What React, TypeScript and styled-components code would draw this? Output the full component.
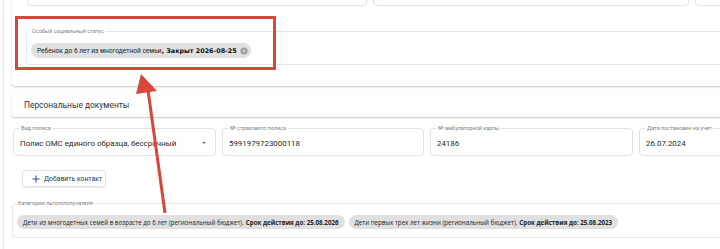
import styled, { createGlobalStyle } from 'styled-components';

const GlobalStyle = createGlobalStyle`
  html, body {
    margin: 0;
    padding: 0;
    background: #fff;
    overflow: hidden;
  }
  body {
    font-family: Roboto, "Liberation Sans", Arial, sans-serif;
    color: #222;
  }
`;

const Page = styled.div`
  position: relative;
  width: 720px;
  height: 249px;
  overflow: hidden;
  padding-left: 3px;
  box-sizing: border-box;
`;

const Shell = styled.div`
  height: 100%;
  border-left: 1px solid #e6e6e6;
  padding-left: 8px;
  display: flex;
  flex-direction: column;
  align-items: flex-start;
`;

const Card = styled.div`
  width: 760px;
  flex-shrink: 0;
  background: #fff;
  border-radius: 3px;
  box-shadow: 0 1px 2px rgba(0, 0, 0, 0.22);
  box-sizing: border-box;
`;

const TopCard = styled(Card)`
  margin-top: -34px;
  padding: 9px 0 21px 14px;
  display: flex;
  flex-direction: column;
  gap: 22px;
`;

const HeaderCard = styled(Card)`
  margin-top: 7px;
  height: 24px;
  padding-left: 12px;
  display: flex;
  align-items: center;
  font-size: 8.4px;
  color: #333;
`;

const Row = styled.div<{ $top?: number }>`
  display: flex;
  gap: 6px;
  margin-top: ${(p) => p.$top ?? 0}px;
  padding-left: 1px;
`;

const Field = styled.fieldset<{ $w: number; $h?: number }>`
  margin: 0;
  padding: 0 6px;
  width: ${(p) => p.$w}px;
  ${(p) => (p.$h ? `height: ${p.$h}px;` : '')}
  flex-shrink: 0;
  min-width: 0;
  box-sizing: border-box;
  border: 1px solid #e2e2e2;
  border-radius: 4px;
`;

const Legend = styled.legend`
  padding: 0 2px;
  margin-left: -1px;
  font-size: 5.5px;
  line-height: 6px;
  color: #808080;
`;

const Value = styled.div`
  height: 24px;
  display: flex;
  align-items: center;
  justify-content: space-between;
  font-size: 7.9px;
  color: #262626;
  white-space: nowrap;
`;

const Caret = styled.span`
  width: 0;
  height: 0;
  margin-right: 3px;
  border-left: 2.5px solid transparent;
  border-right: 2.5px solid transparent;
  border-top: 2.5px solid #707070;
`;

const Group = styled.fieldset<{ $top?: number; $pt: number; $pb: number }>`
  margin: ${(p) => p.$top ?? 0}px 0 0 0;
  padding: ${(p) => p.$pt}px 4px ${(p) => p.$pb}px 4px;
  min-width: 0;
  width: 760px;
  box-sizing: border-box;
  border: 1px solid #e6e6e6;
  border-radius: 4px;
  display: flex;
  gap: 4px;
`;

const Chip = styled.span`
  display: inline-flex;
  align-items: center;
  gap: 3px;
  height: 15px;
  padding: 0 3px 0 6px;
  border-radius: 8px;
  background: #e0e0e0;
  font-size: 6.6px;
  color: #222;
  white-space: nowrap;
`;

const StrongNote = styled.b`
  font-family: "DejaVu Sans", Verdana, sans-serif;
  font-weight: 700;
  font-size: 6.4px;
  color: #111;
`;

const CategoryChip = styled.span`
  display: inline-flex;
  align-items: center;
  height: 14px;
  padding: 0 6px;
  border-radius: 7px;
  background: #e0e0e0;
  font-family: "Open Sans", "Liberation Sans", sans-serif;
  font-size: 6.2px;
  color: #222;
  white-space: nowrap;
  b {
    font-weight: 700;
    margin-left: 2px;
  }
`;

const AddButton = styled.button`
  margin: 14px 0 0 10px;
  width: 84px;
  height: 17px;
  padding: 0 0 0 9px;
  display: flex;
  align-items: center;
  gap: 4px;
  background: #fff;
  border: 1px solid #e2e2e2;
  border-radius: 3px;
  box-shadow: 0 1px 1px rgba(0, 0, 0, 0.08);
  font-family: Roboto, "Liberation Sans", sans-serif;
  font-size: 6.8px;
  color: #333;
  white-space: nowrap;
`;

const Highlight = styled.div`
  position: absolute;
  left: 15px;
  top: 16px;
  width: 261px;
  height: 54px;
  border: 3px solid #d9463b;
  box-sizing: border-box;
  pointer-events: none;
`;

const Overlay = styled.svg`
  position: absolute;
  left: 0;
  top: 0;
  pointer-events: none;
`;

const categories = [
  {
    text: 'Дети из многодетных семей в возрасте до 6 лет (региональный бюджет).',
    until: 'Срок действия до: 25.08.2026',
  },
  {
    text: 'Дети первых трех лет жизни (региональный бюджет).',
    until: 'Срок действия до: 25.08.2023',
  },
];

const documents = [
  { label: 'Вид полиса', value: 'Полис ОМС единого образца, бессрочный', w: 203, select: true },
  { label: '№ страхового полиса', value: '5991979723000118', w: 202 },
  { label: '№ амбулаторной карты', value: '24186', w: 203 },
  { label: 'Дата постановки на учет', value: '26.07.2024', w: 202 },
];

function ClearIcon() {
  return (
    <svg width="8" height="8" viewBox="0 0 8 8">
      <circle cx="4" cy="4" r="3.6" fill="#9a9a9a" />
      <path d="M2.6 2.6 5.4 5.4M5.4 2.6 2.6 5.4" stroke="#e0e0e0" strokeWidth="0.9" />
    </svg>
  );
}

function PlusIcon() {
  return (
    <svg width="8" height="8" viewBox="0 0 8 8">
      <path d="M4 0.5v7M0.5 4h7" stroke="#3949ab" strokeWidth="1.1" />
    </svg>
  );
}

function App() {
  return (
    <>
      <GlobalStyle />
      <Page>
        <Shell>
          <TopCard>
            <Row>
              <Field $w={340} $h={31} />
              <Field $w={316} $h={31} />
              <Field $w={100} $h={31} />
            </Row>
            <Group $pt={9} $pb={6}>
              <Legend>Особый социальный статус</Legend>
              <Chip>
                <span>
                  Ребенок до 6 лет из многодетной семьи<StrongNote>, Закрыт 2026-08-25</StrongNote>
                </span>
                <ClearIcon />
              </Chip>
            </Group>
          </TopCard>

          <HeaderCard>Персональные документы</HeaderCard>

          <Row $top={8}>
            {documents.map((d) => (
              <Field key={d.label} $w={d.w}>
                <Legend>{d.label}</Legend>
                <Value>
                  {d.value}
                  {d.select && <Caret />}
                </Value>
              </Field>
            ))}
          </Row>

          <AddButton>
            <PlusIcon />
            Добавить контакт
          </AddButton>

          <Group $top={13} $pt={9} $pb={8}>
            <Legend>Категории льготополучателя</Legend>
            {categories.map((c) => (
              <CategoryChip key={c.until}>
                {c.text}
                <b>{c.until}</b>
              </CategoryChip>
            ))}
          </Group>
        </Shell>

        <Highlight />
        <Overlay width="720" height="249" viewBox="0 0 720 249">
          <line x1="148" y1="90" x2="165" y2="213" stroke="#d9463b" strokeWidth="3" />
          <polygon points="141,74 136,94 157,91" fill="#d9463b" />
        </Overlay>
      </Page>
    </>
  );
}

export default App;
